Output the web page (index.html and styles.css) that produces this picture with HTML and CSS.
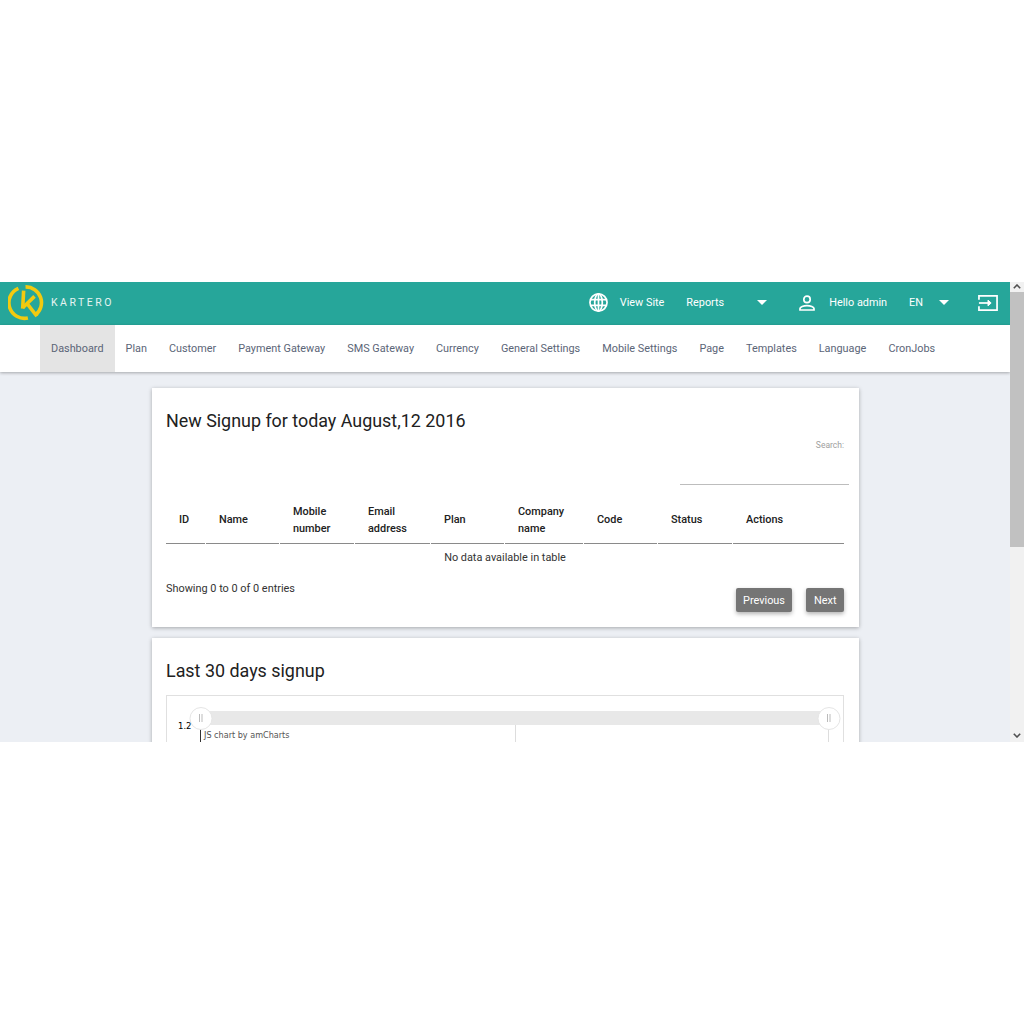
FILE: index.html
```html
<!DOCTYPE html>
<html lang="en">
<head>
<meta charset="utf-8">
<title>Kartero Dashboard</title>
<link rel="stylesheet" href="styles.css">
</head>
<body>
<div class="window">
  <div class="page">
    <header class="topbar">
      <div class="brand">
        <svg class="logo" width="36" height="36" viewBox="0 0 38 38" fill="none" stroke="#f2ca10" stroke-width="3.800">
          <path d="M11 3.500A16.500 16.500 0 0 0 21 34.800"/>
          <path d="M29 31.500A16.500 16.500 0 0 0 18.500 2"/>
          <path d="M16.500 6L15.500 25"/>
          <path d="M28 12L15.500 24"/>
          <path d="M20 19.500L30.500 33"/>
        </svg>
        <span class="brand-name">KARTERO</span>
      </div>
      <div class="top-actions">
        <svg class="globe" width="19" height="19" viewBox="0 0 20 20" fill="none" stroke="#fff" stroke-width="1.800">
          <circle cx="10" cy="10" r="9"/>
          <ellipse cx="10" cy="10" rx="4" ry="9"/>
          <path d="M1.800 7h16.400M1.800 13h16.400M10 1v18"/>
        </svg>
        <span class="top-link view-site">View Site</span>
        <span class="top-link reports">Reports</span>
        <span class="caret caret-reports"></span>
        <svg class="user" width="16" height="16" viewBox="0 0 16 16" fill="none" stroke="#fff" stroke-width="1.700">
          <circle cx="8" cy="4.400" r="3.200"/>
          <path d="M1 15v-1.400c0-1.600 3.500-2.900 7-2.900s7 1.300 7 2.900V15z"/>
        </svg>
        <span class="top-link hello">Hello admin</span>
        <span class="top-link lang">EN</span>
        <span class="caret caret-lang"></span>
        <svg class="signout" width="20" height="18" viewBox="0 0 21 18" fill="none" stroke="#fff" stroke-width="1.800">
          <path d="M1 5.500V1.500h19v15H1v-4"/>
          <path d="M1 9h11.500"/>
          <path d="M10.500 6l3.300 3-3.300 3z" fill="#fff" stroke-width="1"/>
        </svg>
      </div>
    </header>
    <nav class="menu">
      <a class="menu-item active">Dashboard</a>
      <a class="menu-item">Plan</a>
      <a class="menu-item">Customer</a>
      <a class="menu-item">Payment Gateway</a>
      <a class="menu-item">SMS Gateway</a>
      <a class="menu-item">Currency</a>
      <a class="menu-item">General Settings</a>
      <a class="menu-item">Mobile Settings</a>
      <a class="menu-item">Page</a>
      <a class="menu-item">Templates</a>
      <a class="menu-item">Language</a>
      <a class="menu-item">CronJobs</a>
    </nav>
    <main class="content">
      <section class="card signup-card">
        <h2 class="card-title">New Signup for today August,12 2016</h2>
        <div class="search">
          <label class="search-label">Search:</label>
          <div class="search-input"></div>
        </div>
        <table class="data-table">
          <colgroup>
            <col class="c1"><col class="c2"><col class="c3"><col class="c4"><col class="c5"><col class="c6"><col class="c7"><col class="c8"><col class="c9">
          </colgroup>
          <thead>
            <tr>
              <th>ID</th><th>Name</th><th>Mobile number</th><th>Email address</th><th>Plan</th><th>Company name</th><th>Code</th><th>Status</th><th>Actions</th>
            </tr>
          </thead>
          <tbody>
            <tr><td colspan="9">No data available in table</td></tr>
          </tbody>
        </table>
        <div class="table-foot">
          <span class="entries">Showing 0 to 0 of 0 entries</span>
          <div class="pager">
            <button class="page-btn">Previous</button>
            <button class="page-btn">Next</button>
          </div>
        </div>
      </section>
      <section class="card chart-card">
        <h2 class="card-title">Last 30 days signup</h2>
        <div class="chart-box">
          <svg class="chart" width="678" height="60" viewBox="0 0 678 60">
            <rect x="34" y="16" width="629" height="14" fill="#e8e8e8"/>
            <path d="M34.500 30V60" stroke="#333" fill="none"/>
            <path d="M349.500 30V60M662.500 30V60" stroke="#ddd" fill="none"/>
            <circle class="handle" cx="35" cy="23.500" r="11"/>
            <circle class="handle" cx="663" cy="23.500" r="11"/>
            <path d="M33.500 19v8M36 19v8M661.500 19v8M664 19v8" stroke="#bbb" fill="none"/>
            <text class="axis-label" x="12" y="34">1.2</text>
            <text class="credit" x="38" y="43">JS chart by amCharts</text>
          </svg>
        </div>
      </section>
    </main>
  </div>
  <div class="scrollbar">
    <div class="sb-btn sb-up"><svg width="8" height="5" viewBox="0 0 8 5" fill="none" stroke="#505050" stroke-width="1.600"><path d="M.8 4.200L4 1l3.200 3.200"/></svg></div>
    <div class="sb-thumb"></div>
    <div class="sb-track"></div>
    <div class="sb-btn sb-down"><svg width="8" height="5" viewBox="0 0 8 5" fill="none" stroke="#505050" stroke-width="1.600"><path d="M.8.800L4 4 7.200.8"/></svg></div>
  </div>
</div>
</body>
</html>
```
FILE: styles.css
```css
* { box-sizing: border-box; }
html, body { margin: 0; background: #fff; }
body { padding-top: 282px; font-family: Roboto, "Liberation Sans", sans-serif; }
.window { display: flex; width: 1024px; height: 460px; overflow: hidden; }
.page { width: 1010px; height: 460px; background: #eceff4; overflow: hidden; }
.topbar { display: flex; align-items: center; justify-content: space-between; height: 43px; padding-bottom: 2px; background: #26a69a; }
.brand { display: flex; align-items: center; padding-left: 8px; }
.brand-name { margin-left: 7px; font-size: 10.500px; letter-spacing: 2.500px; color: #e6f4f2; }
.top-actions { display: flex; align-items: center; color: #fff; font-size: 10.870px; }
.globe { margin-right: 12px; }
.reports { margin-left: 22px; }
.caret { width: 0; height: 0; border-left: 5px solid transparent; border-right: 5px solid transparent; border-top: 5px solid #fff; }
.caret-reports { margin-left: 33px; }
.user { margin-left: 32px; margin-right: 14px; }
.lang { margin-left: 22px; }
.caret-lang { margin-left: 16px; }
.signout { margin-left: 29px; margin-right: 12px; }
.menu { display: flex; height: 47px; padding-left: 40px; background: #fff; box-shadow: 0 1px 3px rgba(0,0,0,.3); position: relative; }
.menu-item { display: flex; align-items: center; padding: 0 11px; font-size: 10.870px; color: #5b6577; }
.menu-item.active { background: #e4e4e4; }
.content { padding: 16px 151px 0 152px; }
.card { background: #fff; box-shadow: 0 1px 4px rgba(0,0,0,.3); padding: 0 15px 0 14px; }
.signup-card { height: 239px; margin-bottom: 11px; }
.chart-card { height: 200px; }
.card-title { margin: 0; padding-top: 22px; font-size: 17.900px; line-height: 22px; font-weight: 400; color: #212121; }
.search { display: flex; flex-direction: column; align-items: flex-end; height: 53px; margin-right: -5px; margin-top: 6px; }
.search-label { margin-right: 5px; font-size: 8.500px; line-height: 14px; color: #9e9e9e; }
.search-input { width: 169px; margin-top: 32px; border-bottom: 1px solid #bdbdbd; }
.data-table { width: 678px; margin-top: 5px; table-layout: fixed; border-collapse: separate; border-spacing: 1px 0; margin-left: -1px; font-size: 10.900px; color: #212121; }
.c1 { width: 39px; } .c2 { width: 73px; } .c3 { width: 74px; } .c4 { width: 75px; } .c5 { width: 73px; } .c6 { width: 78px; } .c7 { width: 73px; } .c8 { width: 74px; } .c9 { width: 111px; }
.data-table th { height: 48px; padding: 0 12px 0 13px; text-align: left; font-weight: 500; line-height: 17px; border-bottom: 1px solid #8a8a8a; }
.data-table td { height: 26px; text-align: center; color: #333; }
.table-foot { display: flex; justify-content: space-between; align-items: flex-start; margin-top: 11px; }
.entries { font-size: 10.900px; line-height: 14px; color: #333; margin-top: 1px; }
.pager { display: flex; gap: 14px; margin-top: 7px; }
.page-btn { height: 24px; padding: 0 7.500px; border: 0; border-radius: 2px; background: #757575; color: #fff; font: 10.900px Roboto, "Liberation Sans", sans-serif; box-shadow: 0 2px 4px rgba(0,0,0,.3); }
.chart-box { height: 120px; margin-top: 13px; border: 1px solid #e0e0e0; overflow: hidden; }
.chart { display: block; margin: -1px; }
.handle { fill: #fff; stroke: #e5e5e5; stroke-width: 1; }
.axis-label { font: 8.500px "DejaVu Sans", sans-serif; fill: #000; }
.credit { font: 8.100px "DejaVu Sans", sans-serif; fill: #555; }
.scrollbar { display: flex; flex-direction: column; width: 14px; background: #f1f1f1; }
.sb-btn { display: flex; align-items: center; justify-content: center; flex: none; }
.sb-up { height: 10px; padding-bottom: 2px; }
.sb-down { height: 14px; }
.sb-thumb { height: 255px; background: #c1c1c1; flex: none; }
.sb-track { flex: 1; }
```
